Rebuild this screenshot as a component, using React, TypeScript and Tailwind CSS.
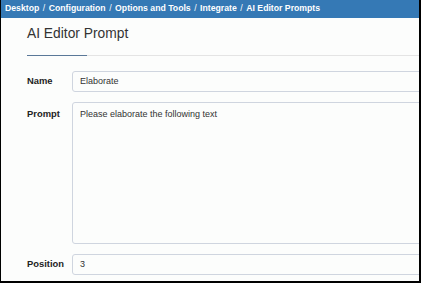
export default function App() {
  const font = { fontFamily: '"Liberation Sans", Arial, sans-serif' };
  const crumbs = ['Desktop', 'Configuration', 'Options and Tools', 'Integrate', 'AI Editor Prompts'];
  return (
    <div
      className="w-[421px] h-[283px] overflow-hidden bg-[#fcfdfc] border-l border-r-2 border-b-2 border-black flex flex-col"
      style={font}
    >
      <div className="h-[18px] shrink-0 bg-[#3579b5] text-white text-[8.7px] font-bold flex items-center pl-[4px] whitespace-nowrap">
        {crumbs.map((c, i) => (
          <span key={c} className="flex">
            {i > 0 && <span className="mx-[3.5px] font-normal">/</span>}
            {c}
          </span>
        ))}
      </div>
      <div className="pl-[26px] flex flex-col">
        <h1 className="text-[13.8px] text-[#333] leading-none mt-[9px] whitespace-nowrap">AI Editor Prompt</h1>
        <div className="flex mt-[14px] h-px">
          <div className="w-[60px] bg-[#5a7898]" />
          <div className="flex-1 bg-[#e4e4e4]" />
        </div>
        <div className="flex flex-col gap-[10px] mt-[15px] text-[9px]">
          <div className="flex items-center">
            <div className="w-[45px] shrink-0 font-bold text-[9.4px] text-[#222]">Name</div>
            <div className="w-[400px] shrink-0 h-[21px] border border-[#cfd5df] rounded-[3px] flex items-center pl-[7px] text-[#333]">
              Elaborate
            </div>
          </div>
          <div className="flex items-start">
            <div className="w-[45px] shrink-0 font-bold text-[9.4px] text-[#222] pt-[5px]">Prompt</div>
            <div className="w-[400px] shrink-0 h-[142px] border border-[#cfd5df] rounded-[3px] pl-[7px] pt-[5px] text-[#333]">
              Please elaborate the following text
            </div>
          </div>
          <div className="flex items-center">
            <div className="w-[45px] shrink-0 font-bold text-[9.4px] text-[#222]">Position</div>
            <div className="w-[400px] shrink-0 h-[21px] border border-[#cfd5df] rounded-[3px] flex items-center pl-[7px] text-[#333]">
              3
            </div>
          </div>
        </div>
      </div>
    </div>
  );
}
